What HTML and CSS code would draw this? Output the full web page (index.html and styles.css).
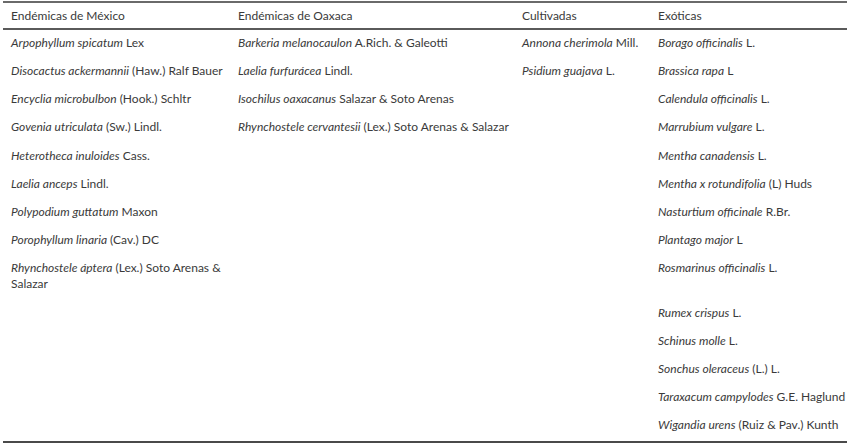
FILE: index.html
```html
<!DOCTYPE html>
<html lang="es">
<head>
    <meta charset="UTF-8">
    <title>Especies</title>
    <link rel="stylesheet" href="styles.css">
</head>
<body>
<table class="species_table">
    <colgroup>
        <col class="col_mexico">
        <col class="col_oaxaca">
        <col class="col_cultivadas">
        <col class="col_exoticas">
    </colgroup>
    <thead>
    <tr>
        <th>Endémicas de México</th>
        <th>Endémicas de Oaxaca</th>
        <th>Cultivadas</th>
        <th>Exóticas</th>
    </tr>
    </thead>
    <tbody>
    <tr>
        <td><i>Arpophyllum spicatum</i> Lex</td>
        <td><i>Barkeria melanocaulon</i> A.Rich. &amp; Galeotti</td>
        <td><i>Annona cherimola</i> Mill.</td>
        <td><i>Borago officinalis</i> L.</td>
    </tr>
    <tr>
        <td><i>Disocactus ackermannii</i> (Haw.) Ralf Bauer</td>
        <td><i>Laelia furfurácea</i> Lindl.</td>
        <td><i>Psidium guajava</i> L.</td>
        <td><i>Brassica rapa</i> L</td>
    </tr>
    <tr>
        <td><i>Encyclia microbulbon</i> (Hook.) Schltr</td>
        <td><i>Isochilus oaxacanus</i> Salazar &amp; Soto Arenas</td>
        <td></td>
        <td><i>Calendula officinalis</i> L.</td>
    </tr>
    <tr>
        <td><i>Govenia utriculata</i> (Sw.) Lindl.</td>
        <td><i>Rhynchostele cervantesii</i> (Lex.) Soto Arenas &amp; Salazar</td>
        <td></td>
        <td><i>Marrubium vulgare</i> L.</td>
    </tr>
    <tr>
        <td><i>Heterotheca inuloides</i> Cass.</td>
        <td></td>
        <td></td>
        <td><i>Mentha canadensis</i> L.</td>
    </tr>
    <tr>
        <td><i>Laelia anceps</i> Lindl.</td>
        <td></td>
        <td></td>
        <td><i>Mentha x rotundifolia</i> (L) Huds</td>
    </tr>
    <tr>
        <td><i>Polypodium guttatum</i> Maxon</td>
        <td></td>
        <td></td>
        <td><i>Nasturtium officinale</i> R.Br.</td>
    </tr>
    <tr>
        <td><i>Porophyllum linaria</i> (Cav.) DC</td>
        <td></td>
        <td></td>
        <td><i>Plantago major</i> L</td>
    </tr>
    <tr>
        <td><i>Rhynchostele áptera</i> (Lex.) Soto Arenas &amp;<br>Salazar</td>
        <td></td>
        <td></td>
        <td><i>Rosmarinus officinalis</i> L.</td>
    </tr>
    <tr>
        <td></td>
        <td></td>
        <td></td>
        <td><i>Rumex crispus</i> L.</td>
    </tr>
    <tr>
        <td></td>
        <td></td>
        <td></td>
        <td><i>Schinus molle</i> L.</td>
    </tr>
    <tr>
        <td></td>
        <td></td>
        <td></td>
        <td><i>Sonchus oleraceus</i> (L.) L.</td>
    </tr>
    <tr>
        <td></td>
        <td></td>
        <td></td>
        <td><i>Taraxacum campylodes</i> G.E. Haglund</td>
    </tr>
    <tr>
        <td></td>
        <td></td>
        <td></td>
        <td><i>Wigandia urens</i> (Ruiz &amp; Pav.) Kunth</td>
    </tr>
    </tbody>
</table>
</body>
</html>
```

FILE: styles.css
```css
body {
    margin: 0;
    padding: 1px 0 0 3px;
    background: #fff;
    font-family: Lato, "Open Sans", sans-serif;
    font-size: 12px;
    color: #3a3a3a;
}

.species_table {
    width: 844px;
    table-layout: fixed;
    border-collapse: collapse;
    border-top: 2px solid #6a6a6a;
    border-bottom: 2px solid #4a4a4a;
}

.col_mexico {
    width: 227px;
}

.col_oaxaca {
    width: 284px;
}

.col_cultivadas {
    width: 136px;
}

.col_exoticas {
    width: 197px;
}

.species_table th {
    font-weight: normal;
    text-align: left;
    line-height: 16px;
    padding: 5.4px 8px 4.1px 8px;
    border-bottom: 2px solid #5a5a5a;
}

.species_table td {
    vertical-align: top;
    line-height: 16px;
    padding: 4.4px 8px 7.8px 8px;
    white-space: nowrap;
}
```
